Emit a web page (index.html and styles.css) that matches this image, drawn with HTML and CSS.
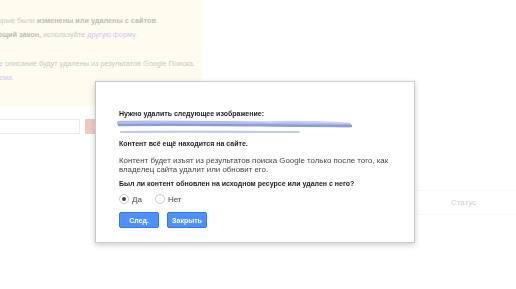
FILE: index.html
```html
<!DOCTYPE html>
<html lang="ru">
<head>
    <meta charset="UTF-8">
    <title>Удаление устаревшего контента</title>
    <link rel="stylesheet" href="styles.css">
</head>
<body>

<div class="page">
    <!-- Info box behind the dialog -->
    <div class="info">
        <p class="line l1"><span>Используйте эту форму для страниц, которые были <b>изменены или удалены с сайтов</b>.</span></p>
        <p class="line l2"><span>Если контент нарушает <b>действующий закон,</b> используйте <a href="#">другую форму</a>.</span></p>
        <p class="line l3"><span>После обработки запроса страница и ее описание будут удалены из результатов Google Поиска.</span></p>
        <p class="line l4"><span><a href="#">Подробнее о том, как решить эту проблема</a>.</span></p>
    </div>

    <div class="request">
        <input type="text" class="url-input">
        <button class="red-btn">Запрос</button>
    </div>

    <div class="table-head">
        <span>Статус</span>
    </div>
</div>

<!-- Modal -->
<div class="overlay"></div>
<div class="dialog">
    <p class="title">Нужно удалить следующее изображение:</p>
    <svg class="scribble" width="240" height="16" viewBox="0 0 240 16">
        <defs>
            <filter id="soft"><feGaussianBlur stdDeviation="0.7"/></filter>
        </defs>
        <g filter="url(#soft)" fill="none" stroke-linecap="round">
            <path d="M2 4 C60 3 150 5 232 6" stroke="#b4bdeb" stroke-width="4.5"/>
            <path d="M2 6 C80 5 160 7 234 7" stroke="#8e9bdc" stroke-width="2.5"/>
            <path d="M150 3 C180 2 205 3 225 4" stroke="#ccd2f0" stroke-width="1.5"/>
            <path d="M4 13 C60 12 130 13 182 13" stroke="#c2c9ee" stroke-width="2.2"/>
        </g>
    </svg>

    <p class="title">Контент всё ещё находится на сайте.</p>
    <p class="text">Контент будет изъят из результатов поиска Google только после того, как владелец сайта удалит или обновит его.</p>

    <p class="title">Был ли контент обновлен на исходном ресурсе или удален с него?</p>
    <div class="choices">
        <label class="choice"><span class="radio checked"></span>Да</label>
        <label class="choice"><span class="radio"></span>Нет</label>
    </div>

    <div class="buttons">
        <button class="blue-btn">След.</button>
        <button class="blue-btn">Закрыть</button>
    </div>
</div>

</body>
</html>
```

FILE: styles.css
```css
body {
    margin: 0;
    font-family: "Liberation Sans", Arial, sans-serif;
    background: #fff;
    overflow: hidden;
}

.page {
    width: 516px;
    height: 289px;
}

.info {
    width: 202px;
    height: 107px;
    background: #fbf1c8;
    overflow: hidden;
    padding-top: 14px;
    box-sizing: border-box;
}

/* lines are right-aligned so the start runs off the left edge */
.line {
    display: flex;
    justify-content: flex-end;
    margin: 0;
    white-space: nowrap;
    font-size: 7.3px;
    line-height: 14px;
    color: #3a3a3a;
}

.line b {
    color: #111;
}

.line a {
    color: #5a2ad0;
    text-decoration: none;
}

.l1 { padding-right: 44px; }
.l2 { padding-right: 65px; margin-bottom: 15px; }
.l3 { padding-right: 7px; }
.l4 { padding-right: 188px; }

.request {
    display: flex;
    gap: 5px;
    margin-top: 12px;
}

.url-input {
    width: 81px;
    height: 15px;
    margin: 0 0 0 -1px;
    padding: 0;
    border: 1px solid #bbb;
    box-sizing: border-box;
}

.red-btn {
    height: 15px;
    width: 40px;
    border: 0;
    padding: 0;
    background: #c4483e;
    color: #fff;
    font-size: 7px;
}

.table-head {
    margin: 56px 0 0 416px;
    border-top: 1px solid #e6e6e6;
    border-bottom: 1px solid #e6e6e6;
    height: 23px;
    display: flex;
    align-items: center;
    padding-left: 35px;
    font-size: 8px;
    color: #555;
}

.overlay {
    position: fixed;
    inset: 0;
    background: rgba(255, 255, 255, 0.7);
}

.dialog {
    position: absolute;
    left: 95px;
    top: 81px;
    width: 320px;
    height: 162px;
    box-sizing: border-box;
    background: #fff;
    border: 1px solid #c8c8c8;
    box-shadow: 0 2px 6px rgba(0, 0, 0, 0.2);
    padding: 27px 23px 0 23px;
    color: #222;
}

.title {
    margin: 0;
    font-size: 7px;
    font-weight: bold;
    line-height: 10px;
}

.scribble {
    display: block;
    margin: 0 0 4px -2px;
}

.text {
    margin: 7px 0 5px;
    font-size: 7.9px;
    line-height: 9px;
    color: #444;
}

.choices {
    display: flex;
    gap: 13px;
    margin-top: 5px;
    font-size: 8px;
    color: #444;
}

.choice {
    display: flex;
    align-items: center;
    gap: 3px;
}

.radio {
    width: 8px;
    height: 8px;
    border: 1px solid #ccc;
    border-radius: 50%;
    position: relative;
}

.radio.checked::after {
    content: "";
    position: absolute;
    left: 2px;
    top: 2px;
    width: 4px;
    height: 4px;
    border-radius: 50%;
    background: #444;
}

.buttons {
    display: flex;
    gap: 8px;
    margin-top: 8px;
}

.blue-btn {
    width: 40px;
    height: 16px;
    padding: 0;
    background: #4d90fe;
    border: 1px solid #3079ed;
    border-radius: 2px;
    color: #fff;
    font-family: "Liberation Sans", Arial, sans-serif;
    font-size: 7px;
    font-weight: bold;
}
```
